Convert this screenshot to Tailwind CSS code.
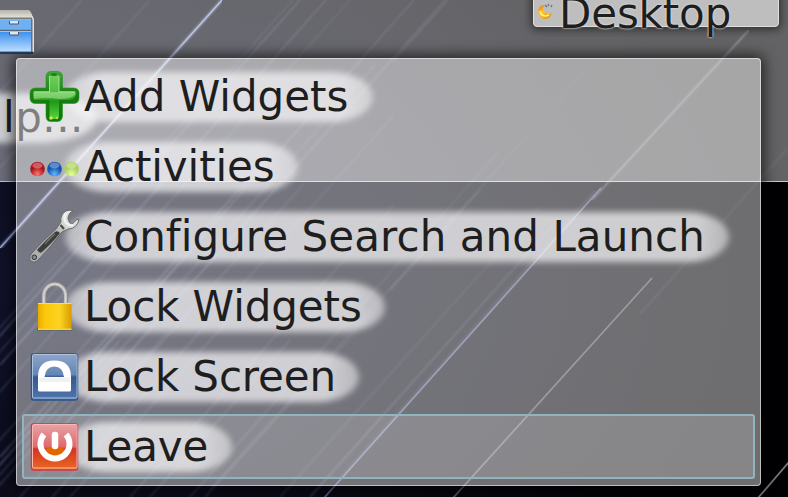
<!DOCTYPE html>
<html lang="en">
<head>
<meta charset="utf-8">
<title>Desktop</title>
<script src="https://cdn.jsdelivr.net/npm/@tailwindcss/browser@4"></script>
</head>
<body class="overflow-hidden bg-black">
<main class="relative h-[497px] w-[788px] overflow-hidden bg-[#020206] font-['DejaVu_Sans',sans-serif] text-[42px] leading-[70px] text-[#1e1e1e] whitespace-nowrap">
  <!-- wallpaper -->
  <svg class="absolute inset-0" width="788" height="497" viewBox="0 0 788 497" fill="none">
    <defs>
      <radialGradient id="wall" cx="0" cy=".55" r=".95"><stop stop-color="#10122a"/><stop offset=".5" stop-color="#0b0b1a"/><stop offset="1" stop-color="#010104"/></radialGradient>
      <filter id="soft" x="0" y="0" width="1" height="1"><feGaussianBlur stdDeviation=".8"/></filter>
      <linearGradient id="fade" gradientUnits="userSpaceOnUse" x1="0" y1="450" x2="600" y2="50"><stop stop-color="#6d76a0"/><stop offset=".45" stop-color="#484e6a"/><stop offset="1" stop-color="#22242e"/></linearGradient>
    </defs>
    <rect width="788" height="497" fill="url(#wall)"/>
    <g stroke="url(#fade)" stroke-width="1.500" opacity=".36" filter="url(#soft)">
      <path d="M82 0-20 114M150 0-20 190M293 0-20 350M350 0-20 414M375 65-20 507M394 115 52 497M394 205 130 497M500 150 190 497M590 65 210 490"/>
      <path d="M60 284-20 374M100 328-20 462M120 340-20 497M168 332 20 497M230 318 70 497M290 340 150 497M380 305 205 497M540 207 280 497M304 184 110 400"/>
    </g>
    <g stroke="url(#fade)" stroke-width="1.600" opacity=".58" filter="url(#soft)">
      <path d="M300 0-20 358M326 0 0 365M414 0 60 396M445 0 60 430M448 0 394 60M205 235-20 487M270 155 0 457M560 217 310 497M480 190 390 290"/>
      <path d="M788 148 640 314"/>
    </g>
    <path d="M596 190 340 478" stroke="#484e6a" stroke-width="1.300" opacity=".45" filter="url(#soft)"/>
    <path d="M222 0 0 248" stroke="#98a8dc" stroke-width="2" filter="url(#soft)" opacity=".8"/>
    <path d="M222 0 0 248" stroke="#a3b5ea" stroke-width="1.200" opacity=".85"/>
    <path d="M749 30 592 200" stroke="#4c4e5a" stroke-width="2" opacity=".65" filter="url(#soft)"/>
    <path d="M749 30 592 200" stroke="#4c4e5a" stroke-width="1.200" opacity=".5"/>
    <path d="M601 188 324 498" stroke="#6a72a0" stroke-width="1.800" opacity=".75"/>
    <path d="M652 278 453 498" stroke="#66666d" stroke-width="1.700" opacity=".8"/>
    <path d="M789 462 758 498" stroke="#77777a" stroke-width="1.700"/>
  </svg>

  <!-- translucent activity panel -->
  <section class="absolute -left-4 -top-4 h-[198px] w-[804px] border-b border-[#c8c8ca] bg-white/39"></section>

  <!-- file cabinet launcher -->
  <svg class="absolute left-0 top-0 z-10" width="50" height="60" viewBox="0 0 50 60">
    <defs>
      <linearGradient id="cabTop" x2="0" y2="1"><stop stop-color="#b4b4ac"/><stop offset="1" stop-color="#e6e6e0"/></linearGradient>
      <linearGradient id="cab" x2="0" y2="1"><stop stop-color="#3f91ee"/><stop offset="1" stop-color="#b8dcff"/></linearGradient>
    </defs>
    <rect x="-4" y="50" width="37" height="4" fill="#1d222c" opacity=".75"/>
    <path d="M-4 10H27Q30 10 31 13L34 19V52H-4Z" fill="#dededa"/>
    <path d="M-4 10H27Q30 10 31 13L33 18H-4Z" fill="url(#cabTop)"/>
    <path d="M-4 18.500H32" stroke="#7a7b74" stroke-width="2"/>
    <rect x="-4" y="20" width="35.500" height="10" fill="#6fb0f3"/>
    <rect x="-4" y="32" width="35.500" height="19" fill="url(#cab)"/>
    <path d="M-4 30.500H31M31.800 19V52" stroke="#5c6670" stroke-width="1.300"/>
    <path d="M-4 52H33" stroke="#234b92" stroke-width="1"/>
    <path d="M9.500 21V24H18.500V21M9.500 32V35H18.500V32" fill="#dce8f4" stroke="#556" stroke-width="1"/>
  </svg>

  <!-- partially covered launcher label -->
  <div class="absolute -left-12 top-[93px] h-[50px] w-[145px] rounded-[50%/60%] rounded-l-none bg-[#f6f6f8]/71 blur-[3px]"></div>
  <div class="absolute left-[3px] top-[83px] tracking-[.5px]">lp...</div>

  <!-- desktop toolbox -->
  <div class="absolute left-[533px] -top-4 h-[43px] w-[246px] rounded-[4px] border border-[#dedede] bg-[#bebebf] shadow-[0_1px_8px_2px_rgba(0,0,0,.5)]">
    <svg class="absolute left-[3px] top-[16px]" width="18" height="22" viewBox="0 0 18 22">
      <defs><linearGradient id="moon" x2=".6" y2="1"><stop stop-color="#f06c05"/><stop offset=".5" stop-color="#ffc62d"/><stop offset="1" stop-color="#f19a00"/></linearGradient></defs>
      <path d="M7 4Q1 5 1 11Q2 18 9 18Q14 17 15 12Q12 14 9 12Q5 9 7 4" fill="url(#moon)"/>
      <path d="M3 10Q4 15 9 15L12 14" stroke="#fff087" stroke-width="1.500" fill="none"/>
      <path d="M8 4 10 6M11 3 12 5M15 4 14 6" stroke="#6c6c70" stroke-width="1.200"/>
    </svg>
    <span class="absolute left-[25px] top-[-6px] tracking-[-.15px] [text-shadow:0_0_2px_#ddd,0_0_2px_#ddd]">Desktop</span>
  </div>

  <!-- context menu -->
  <nav class="absolute left-4 top-[58px] h-[428px] w-[745px] rounded-[4px] border border-white/55 bg-white/43 px-[5px] pt-[3px] shadow-[0_0_14px_3px_rgba(0,0,0,.65)]">
    <a class="relative flex h-[70px] items-center pl-[7px]">
      <svg class="relative z-10 shrink-0" width="52" height="56" viewBox="0 0 52 56">
        <defs>
          <linearGradient id="plus" x2="0" y2="1"><stop stop-color="#3fa838"/><stop offset=".45" stop-color="#178012"/><stop offset="1" stop-color="#0d7a08"/></linearGradient>
          <linearGradient id="plusIn" x2="0" y2="1"><stop stop-color="#6fd05c"/><stop offset=".45" stop-color="#4fb83e"/><stop offset=".6" stop-color="#1f9a18"/><stop offset="1" stop-color="#5bd43e"/></linearGradient>
        </defs>
        <path d="M22 2.500H28Q33 2.500 33.500 7V19H45Q50 19.500 50 24V29Q50 34 45 34.500H33.500V47Q33 52.500 28 52.500H22Q17 52.500 17 47V34.500H6Q1 34 1 29V24Q1 19.500 6 19H17V7Q17.500 2.500 22 2.500Z" fill="url(#plus)" stroke="#2a8f24" stroke-width=".6"/>
        <path d="M22.500 6H28Q30 6 30 8V22H45Q47 22 47 25Q46 30 41 31L30 31V47Q30 49 28 50H22.500Q20.500 49 20.500 47V31H6Q4 30 4 27V24Q4 22 6 22H20.500V8Q20.500 6 22.500 6Z" fill="url(#plusIn)"/>
        <path d="M5 23H46V25Q44 30 30 30Q16 28 5 30Z" fill="#c4f0b4" fill-opacity=".45"/>
        <path d="M5 23H20.500V7M30 7V23H46" fill="none" stroke="#a9e698" stroke-width=".9"/>
        <ellipse cx="25" cy="5.500" rx="3" ry="1.500" fill="#1c8516"/>
        <circle cx="22" cy="49" r="1.800" fill="#d3e84c"/><circle cx="28" cy="49" r="1.200" fill="#b9e23e"/>
      </svg>
      <span class="absolute left-[43px] top-[10px] h-[50px] w-[308px] rounded-[42px/25px] bg-[linear-gradient(90deg,rgba(246,246,248,.5),rgba(246,246,248,.71)_32px,rgba(246,246,248,.71)_calc(100%_-_32px),rgba(246,246,248,.5))] blur-[3px]"></span>
      <span class="relative ml-[3px]">Add Widgets</span>
    </a>
    <a class="relative flex h-[70px] items-center pl-[7px]">
      <svg class="relative z-10 shrink-0" width="52" height="56" viewBox="0 0 52 56">
        <defs>
          <radialGradient id="red" cy=".85"><stop stop-color="#ff7770"/><stop offset="1" stop-color="#ae1319"/></radialGradient>
          <radialGradient id="blue" cy=".85"><stop stop-color="#63b8ff"/><stop offset="1" stop-color="#1253ad"/></radialGradient>
          <radialGradient id="lime" cy=".85"><stop stop-color="#e9ff9e"/><stop offset="1" stop-color="#a9d05e"/></radialGradient>
        </defs>
        <circle cx="8.500" cy="30" r="7.300" fill="url(#red)"/><circle cx="25.500" cy="30" r="7.300" fill="url(#blue)"/><circle cx="42.500" cy="30" r="7.300" fill="url(#lime)"/>
        <g fill="#fff" opacity=".32"><ellipse cx="8.500" cy="26.500" rx="5" ry="3"/><ellipse cx="25.500" cy="26.500" rx="5" ry="3"/><ellipse cx="42.500" cy="26.500" rx="5" ry="3"/></g>
      </svg>
      <span class="absolute left-[43px] top-[10px] h-[50px] w-[233px] rounded-[42px/25px] bg-[linear-gradient(90deg,rgba(246,246,248,.5),rgba(246,246,248,.71)_32px,rgba(246,246,248,.71)_calc(100%_-_32px),rgba(246,246,248,.5))] blur-[3px]"></span>
      <span class="relative ml-[3px] tracking-[-.1px]">Activities</span>
    </a>
    <a class="relative flex h-[70px] items-center pl-[7px]">
      <svg class="relative z-10 shrink-0" width="52" height="56" viewBox="0 0 52 56">
        <defs><linearGradient id="metal" x1="1" x2="0" y2="1"><stop stop-color="#f4f4f4"/><stop offset=".3" stop-color="#d4d4d2"/><stop offset=".5" stop-color="#a2a2a0"/><stop offset="1" stop-color="#b4b4b2"/></linearGradient></defs>
        <path d="M44 1.500Q36 0 33 6Q31 10 32 13L27 20Q14 31 3 44Q-1 49 2 52Q6 55 10 50Q22 38 33 23L39 20Q48 20 50 10L47 11Q44 16 41 14Q37 9 41 4Z" fill="url(#metal)" stroke="#626262" stroke-width=".9"/>
        <path d="M26 23Q17 31 8 41Q11 45 13 43Q24 33 31 24Q28 21 26 23Z" fill="#3c3c3b"/>
        <path d="M26 25Q20 30 16 35" stroke="#777" stroke-width="1.200" fill="none"/>
        <path d="M37 4Q34 9 37 14Q40 17 44 16" fill="none" stroke="#f2f2f2" stroke-width="2.200"/>
        <path d="M31.500 16 35 20" stroke="#4b4b4b" stroke-width="2.200"/><circle cx="5.300" cy="48.300" r="2.300" fill="#888892" stroke="#333"/>
      </svg>
      <span class="absolute left-[43px] top-[10px] h-[50px] w-[664px] rounded-[42px/25px] bg-[linear-gradient(90deg,rgba(246,246,248,.5),rgba(246,246,248,.71)_32px,rgba(246,246,248,.71)_calc(100%_-_32px),rgba(246,246,248,.5))] blur-[3px]"></span>
      <span class="relative ml-[3px] tracking-[.07px]">Configure Search and Launch</span>
    </a>
    <a class="relative flex h-[70px] items-center pl-[7px]">
      <svg class="relative z-10 shrink-0" width="52" height="56" viewBox="0 0 52 56">
        <defs><linearGradient id="gold"><stop stop-color="#e9aa00"/><stop offset=".2" stop-color="#fcc60c"/><stop offset=".65" stop-color="#fbd320"/><stop offset="1" stop-color="#d99b00"/></linearGradient></defs>
        <path d="M14.800 25V16.500A10.900 11.500 0 0 1 36.600 16.500V25" fill="none" stroke="#858583" stroke-width="4.800"/>
        <path d="M14.800 25V16.500A10.900 11.500 0 0 1 36.600 16.500V25" fill="none" stroke="#bcbcba" stroke-width="3.200"/>
        <path d="M14.800 25V16.500A10.900 11.500 0 0 1 36.600 16.500V25" fill="none" stroke="#dededc" stroke-width="1"/>
        <rect x="8" y="49" width="35" height="3" fill="#444" opacity=".3"/>
        <rect x="9" y="24" width="33.500" height="27" fill="url(#gold)"/>
        <path d="M9 24.500H42.500" stroke="#f6dd78"/><path d="M9 50.300H42.500" stroke="#f7d23a" stroke-width="1.500"/>
      </svg>
      <span class="absolute left-[43px] top-[10px] h-[50px] w-[320px] rounded-[42px/25px] bg-[linear-gradient(90deg,rgba(246,246,248,.5),rgba(246,246,248,.71)_32px,rgba(246,246,248,.71)_calc(100%_-_32px),rgba(246,246,248,.5))] blur-[3px]"></span>
      <span class="relative ml-[3px] tracking-[-.1px]">Lock Widgets</span>
    </a>
    <a class="relative flex h-[70px] items-center pl-[7px]">
      <svg class="relative z-10 shrink-0" width="52" height="56" viewBox="0 0 52 56">
        <defs><linearGradient id="screen" x2="0" y2="1"><stop stop-color="#8ea5c9"/><stop offset=".45" stop-color="#6485b6"/><stop offset=".5" stop-color="#34598f"/><stop offset="1" stop-color="#4f76ad"/></linearGradient></defs>
        <rect x="2.500" y="5" width="46" height="46" rx="2" fill="url(#screen)" stroke="#2f5288" stroke-width="1.500"/>
        <rect x="3.500" y="5.500" width="44.500" height="43.500" rx="1" fill="none" stroke="#adc2de" stroke-width="1"/>
        <path fill="#fff" fill-rule="evenodd" d="M9 41V28Q9 11.500 25.500 11.500T42 28V41Q42 42.500 40.500 42.500H10.500Q9 42.500 9 41ZM15.500 28H35Q34 17.500 25.300 17.500T15.500 28Z"/>
        <path d="M10 28.500H41V33H10Z" fill="#dfe3e6" opacity=".5"/>
      </svg>
      <span class="absolute left-[43px] top-[10px] h-[50px] w-[294px] rounded-[42px/25px] bg-[linear-gradient(90deg,rgba(246,246,248,.5),rgba(246,246,248,.71)_32px,rgba(246,246,248,.71)_calc(100%_-_32px),rgba(246,246,248,.5))] blur-[3px]"></span>
      <span class="relative ml-[3px] tracking-[-.15px]">Lock Screen</span>
    </a>
    <a class="relative flex h-[70px] items-center pl-[7px]">
      <span class="absolute left-0 top-[2px] h-[65px] w-[733px] rounded-[3px] border-2 border-[#91b5bf] bg-white/17"></span>
      <svg class="relative z-10 shrink-0" width="52" height="56" viewBox="0 0 52 56">
        <defs><linearGradient id="leave" x2="0" y2="1"><stop stop-color="#e8a3a8"/><stop offset=".5" stop-color="#e0686a"/><stop offset=".54" stop-color="#d43424"/><stop offset="1" stop-color="#ea6a20"/></linearGradient></defs>
        <rect x="2.500" y="5" width="46" height="46" rx="2" fill="url(#leave)" stroke="#cd3a42" stroke-width="1.500"/>
        <rect x="3.500" y="5.500" width="44.500" height="43.500" rx="1" fill="none" stroke="#fcb9b4" stroke-width="1"/>
        <path d="M14 31Q26 25 38 31Q36 40 26 40T14 31" fill="#e56600"/>
        <path d="M15 15.500A14.500 14.500 0 1 0 37 15.500" fill="none" stroke="#fff" stroke-width="6"/>
        <path d="M26 16V27" stroke="#fff" stroke-width="6.500" stroke-linecap="round"/>
      </svg>
      <span class="absolute left-[43px] top-[10px] h-[50px] w-[167px] rounded-[42px/25px] bg-[linear-gradient(90deg,rgba(246,246,248,.5),rgba(246,246,248,.71)_32px,rgba(246,246,248,.71)_calc(100%_-_32px),rgba(246,246,248,.5))] blur-[3px]"></span>
      <span class="relative ml-[3px] tracking-[-.15px]">Leave</span>
    </a>
  </nav>
</main>
</body>
</html>
